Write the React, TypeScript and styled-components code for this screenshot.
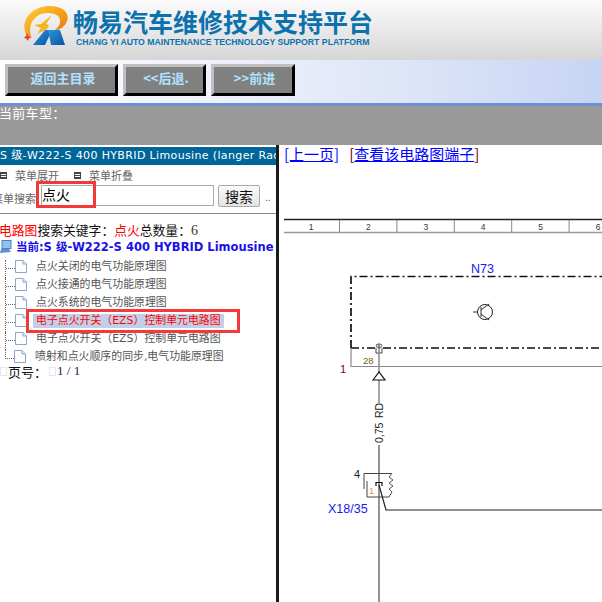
import React from 'react'
import styled, { createGlobalStyle } from 'styled-components'

const GlobalStyle = createGlobalStyle`
  html, body {
    margin: 0;
    padding: 0;
    background: #fff;
    overflow: hidden;
  }
  body {
    font-family: "Liberation Sans", "Noto Sans CJK SC", sans-serif;
  }
`

const Page = styled.div`
  width: 602px;
  height: 602px;
  display: flex;
  flex-direction: column;
  overflow: hidden;
`

const Header = styled.header`
  height: 60px;
  flex: none;
  display: flex;
  align-items: flex-start;
  padding: 5px 0 0 22px;
  box-sizing: border-box;
  gap: 3px;
  background: linear-gradient(#fbfbfb, #f0f0f0 30%, #d6d6d6);
`

const BrandText = styled.div`
  display: flex;
  flex-direction: column;
  padding-top: 1px;
`

const BrandName = styled.div`
  font: 700 25px/30px "Noto Sans CJK SC", sans-serif;
  color: #0b72ae;
  white-space: nowrap;
`

const BrandEnglish = styled.div`
  font: 700 8.7px/12px "Liberation Sans", sans-serif;
  color: #0b72ae;
  margin-left: 3px;
  white-space: nowrap;
`

const Nav = styled.nav`
  height: 46px;
  flex: none;
  display: flex;
  gap: 5px;
  padding: 4px 0 0 5px;
  box-sizing: border-box;
  background: linear-gradient(90deg, #ffffff, #dfe6f8 65%, #c6d4f4);
  border-bottom: 3px solid #6f8fd6;
`

const NavButton = styled.button<{ $width: number }>`
  width: ${(p) => p.$width}px;
  height: 32px;
  padding: 0 0 5px 3px;
  box-sizing: border-box;
  background: #808080;
  border-style: solid;
  border-width: 3px;
  border-color: #c0c0c0 #000 #000 #c0c0c0;
  color: #b0e2ff;
  font: 700 13px "Noto Sans CJK SC", sans-serif;
`

const CarBar = styled.div`
  height: 39px;
  flex: none;
  background: #999;
  color: #fff;
  font: 13px/14px "Noto Sans CJK SC", sans-serif;
  letter-spacing: 0.3px;
  text-indent: -1px;
`

const Body = styled.main`
  flex: 1;
  display: flex;
  min-height: 0;
`

const Side = styled.aside`
  width: 276px;
  flex: none;
  position: relative;
  overflow: hidden;
  padding-top: 2px;
  box-sizing: border-box;
`

const Divider = styled.div`
  width: 3px;
  flex: none;
  background: #1a1a1a;
`

const TitleBar = styled.div`
  height: 18px;
  background: #006699;
  color: #fff;
  font: 11px/18px "DejaVu Sans", "Noto Sans CJK SC", sans-serif;
  letter-spacing: 0.36px;
  white-space: nowrap;
  overflow: hidden;
`

const MenuRow = styled.div`
  height: 20px;
  display: flex;
  align-items: center;
  color: #666;
  font: 11px "Noto Sans CJK SC", sans-serif;
`

const MenuToggle = styled.span<{ $width: number }>`
  width: ${(p) => p.$width}px;
  display: flex;
  align-items: center;
  gap: 8px;
`

const MenuGlyph = styled.i`
  width: 5px;
  height: 5px;
  border: 1px solid #444;
  background: repeating-linear-gradient(#444 0 1px, #fff 1px 2px);
`

const SearchRow = styled.div`
  height: 29px;
  display: flex;
  align-items: flex-start;
  border-bottom: 1px solid #888;
  box-sizing: border-box;
`

const SearchLabel = styled.label`
  width: 41px;
  flex: none;
  margin-left: -8px;
  padding-top: 5px;
  color: #666;
  font: 11px "Noto Sans CJK SC", sans-serif;
  white-space: nowrap;
`

const SearchInput = styled.input`
  width: 173px;
  height: 21px;
  flex: none;
  box-sizing: border-box;
  margin: 0 0 0 8px;
  padding: 0 0 4px 0;
  border: 1px solid #aaa;
  font: 14px "Noto Sans CJK SC", sans-serif;
  color: #000;
  outline: none;
`

const SearchButton = styled.button`
  width: 42px;
  height: 22px;
  flex: none;
  margin-left: 4px;
  padding: 0 0 2px;
  border: 1px solid #aaa;
  border-radius: 2px;
  background: linear-gradient(#fafafa, #e4e4e4);
  font: 14px "Noto Sans CJK SC", sans-serif;
  color: #111;
`

const Dots = styled.span`
  margin: 7px 0 0 5px;
  color: #555;
  font-size: 10px;
`

const ResultLine = styled.div`
  margin-top: 7px;
  height: 18px;
  margin-left: -1px;
  font: 12.8px/18px "Noto Sans CJK SC", sans-serif;
  color: #111;
  white-space: nowrap;
`

const Red = styled.span`
  color: #f00;
`

const Count = styled.span`
  font-family: "Liberation Serif", serif;
  font-size: 14px;
  color: #432;
`

const CurrentLine = styled.div`
  height: 16px;
  display: flex;
  align-items: center;
  gap: 4px;
  color: #1a10e8;
  font: 700 11.5px/16px "DejaVu Sans", "Noto Sans CJK SC", sans-serif;
  white-space: nowrap;
`

const Tree = styled.ul`
  list-style: none;
  margin: 5px 0 0 5px;
  padding: 0;
`

const TreeRow = styled.li<{ $last?: boolean }>`
  height: 18px;
  display: flex;
  align-items: flex-start;
  border-left: ${(p) => (p.$last ? 'none' : '1px dotted #666')};
  margin-left: ${(p) => (p.$last ? '1px' : '0')};
`

const Elbow = styled.span`
  width: 9px;
  height: 8px;
  flex: none;
  border-bottom: 1px dotted #666;
`

const LastElbow = styled(Elbow)`
  border-left: 1px dotted #666;
  width: 8px;
  margin-left: -1px;
`

const RowLabel = styled.span<{ $selected?: boolean }>`
  margin-left: ${(p) => (p.$selected ? '6px' : '9px')};
  padding: 0 ${(p) => (p.$selected ? '3px' : '0')};
  height: 14px;
  font: 10.9px/14px "DejaVu Sans", "Noto Sans CJK SC", sans-serif;
  white-space: nowrap;
  color: ${(p) => (p.$selected ? '#f00' : '#555')};
  background: ${(p) => (p.$selected ? '#c2cfe8' : 'transparent')};
`

const Pager = styled.div`
  display: flex;
  align-items: center;
  height: 18px;
  margin-top: -6px;
  font: 13px "Noto Sans CJK SC", sans-serif;
  color: #111;
`

const PagerMark = styled.i<{ $gap: number }>`
  width: 5px;
  height: 7px;
  margin-left: ${(p) => p.$gap}px;
  margin-right: 1px;
  border: 1px solid #dfe9f3;
`

const PagerValue = styled.span`
  font-family: "Liberation Serif", serif;
  font-size: 13px;
  color: #224;
`

const Callout = styled.div<{ $left: number; $top: number; $w: number; $h: number }>`
  position: absolute;
  left: ${(p) => p.$left}px;
  top: ${(p) => p.$top}px;
  width: ${(p) => p.$w}px;
  height: ${(p) => p.$h}px;
  box-sizing: border-box;
  border: 3px solid #f33a3a;
`

const Content = styled.section`
  flex: 1;
  min-width: 0;
  overflow: hidden;
  padding-left: 5px;
`

const Links = styled.div`
  height: 70px;
  display: flex;
  gap: 10px;
  font: 15px/17px "Noto Sans CJK SC", sans-serif;
  color: #600;
  white-space: nowrap;
`

const PageLink = styled.a`
  color: #00f;
  text-decoration: underline;
`

const Diagram = styled.svg`
  display: block;
  flex: none;
`

function Logo() {
  return (
    <svg width="48" height="42" viewBox="0 0 48 42" style={{ flex: 'none' }}>
      <defs>
        <linearGradient id="ring" x1="0" y1="0" x2="1" y2="1">
          <stop offset="0" stopColor="#ffd23a" />
          <stop offset="0.6" stopColor="#f59a16" />
          <stop offset="1" stopColor="#e8640e" />
        </linearGradient>
        <linearGradient id="leg" x1="0" y1="0" x2="1" y2="1">
          <stop offset="0" stopColor="#2a9ad8" />
          <stop offset="1" stopColor="#0a4ea8" />
        </linearGradient>
      </defs>
      <path
        d="M5 31 C-3 18 8 1 28 1 C41 1 48 8 45 16 C43 22 37 25 32 26 C37 22 40 17 37 12 C34 8 26 7 19 9 C11 12 6 21 9 31 Z"
        fill="url(#ring)"
      />
      <path d="M30 10 L19 19 L12 20 L19 23 L15 29 L25 24 L27 20 L24 19 Z" fill="#f7b41e" />
      <path d="M5 28 L6.5 31 L10 32 L7 33.5 L6 36 L4.5 34 L2 32.5 L4 31 Z" fill="#e8482a" />
      <path d="M11 40 L23 25 L30 25 L23 40 Z" fill="url(#leg)" />
      <path d="M26 25 L38 25 L43 40 L29 40 Z" fill="url(#leg)" />
    </svg>
  )
}

function ComputerIcon() {
  return (
    <svg width="12" height="14" viewBox="0 0 12 14" style={{ flex: 'none' }}>
      <rect x="2" y="0.5" width="9" height="8" fill="#8fc3ee" stroke="#4a7fc0" />
      <path d="M1 9 L9 9 L11 12 L0 13 Z" fill="#5d8fc8" />
    </svg>
  )
}

function DocIcon() {
  return (
    <svg width="12" height="13" viewBox="0 0 12 13" style={{ flex: 'none' }}>
      <path d="M0.5 0.5 H8 L11.5 4 V12.5 H0.5 Z" fill="#fbfdff" stroke="#8aa8c8" />
      <path d="M8 0.5 V4 H11.5" fill="#dbe7f3" stroke="#8aa8c8" />
    </svg>
  )
}

const rulerCells = ['1', '2', '3', '4', '5', '6']

// page coordinates shifted so the drawing starts at x=284, y=215
function Schematic() {
  return (
    <Diagram width="318" height="387" viewBox="0 0 318 387">
      <line x1="0" y1="4.5" x2="318" y2="4.5" stroke="#222" strokeWidth="1.5" />
      <line x1="0" y1="17.5" x2="318" y2="17.5" stroke="#999" strokeWidth="1.5" />
      {rulerCells.map((n, i) => (
        <g key={n}>
          {i < 5 && (
            <line x1={55.5 + i * 57.4} y1="5" x2={55.5 + i * 57.4} y2="17" stroke="#888" />
          )}
          <text
            x={27 + i * 57.4}
            y="14.5"
            fontSize="8.5"
            textAnchor="middle"
            fontFamily="Liberation Sans"
            fill="#333"
          >
            {n}
          </text>
        </g>
      ))}

      <text x="187" y="58" fontSize="12.5" fontFamily="Liberation Sans" fill="#1a1aee">
        N73
      </text>
      <path
        d="M67 133 V61.5 H318 M67 133 H318"
        fill="none"
        stroke="#111"
        strokeWidth="1.7"
        strokeDasharray="8 3 2 3"
      />

      <circle cx="201" cy="97" r="7.5" fill="none" stroke="#222" />
      <path
        d="M193 97 H189 M197 92 V102 M197 95 L205 89 M197 99 L205 105"
        fill="none"
        stroke="#333"
      />

      <path d="M67 133 V151.5 H318" fill="none" stroke="#888" strokeWidth="1.2" />
      <text x="56" y="158" fontSize="11" fontFamily="Liberation Sans" fill="#800000">
        1
      </text>
      <text x="79" y="149" fontSize="9.5" fontFamily="Liberation Sans" fill="#7a5a20">
        28
      </text>
      <text
        transform="translate(98 130) rotate(-90)"
        x="-3"
        fontSize="8.5"
        fontFamily="Liberation Sans"
        fill="#333"
      >
        8
      </text>
      <path d="M92 133 V138 H98 V133" fill="none" stroke="#444" />
      <line x1="95" y1="128" x2="95" y2="188" stroke="#888" strokeWidth="1.5" />
      <path d="M89 165 L95 157 L101 165 Z" fill="#fff" stroke="#111" strokeWidth="1.2" />

      <text
        transform="translate(99 203) rotate(-90)"
        fontSize="10.5"
        fontFamily="Liberation Sans"
        fill="#222"
      >
        RD
      </text>
      <text
        transform="translate(99 228) rotate(-90)"
        fontSize="10.5"
        fontFamily="Liberation Sans"
        fill="#222"
      >
        0,75
      </text>
      <line x1="95" y1="230" x2="95" y2="387" stroke="#888" strokeWidth="1.8" />

      <path d="M80 274 V258.5 H108" fill="none" stroke="#444" />
      <path d="M83 266 V282 H105" fill="none" stroke="#444" />
      <path
        d="M108 258 L105 262 L109 265 L105 268 L109 271 L105 274 L108 277 L105 282"
        fill="none"
        stroke="#555"
      />
      <path d="M92 271 V267.5 H98 V271" fill="none" stroke="#111" strokeWidth="1.2" />
      <path d="M95 270 L102 295 H318" fill="none" stroke="#222" strokeWidth="1.2" />
      <text x="70" y="263" fontSize="11" fontFamily="Liberation Sans" fill="#123">
        4
      </text>
      <text x="85" y="279" fontSize="9.5" fontFamily="Liberation Sans" fill="#e09a30">
        1
      </text>
      <text x="44" y="298" fontSize="12.5" fontFamily="Liberation Sans" fill="#1a1aee">
        X18/35
      </text>
    </Diagram>
  )
}

const results = [
  '点火关闭的电气功能原理图',
  '点火接通的电气功能原理图',
  '点火系统的电气功能原理图',
  '电子点火开关（EZS）控制单元电路图',
  '电子点火开关（EZS）控制单元电路图',
  '喷射和点火顺序的同步,电气功能原理图',
]

export default function App() {
  return (
    <Page>
      <GlobalStyle />
      <Header>
        <Logo />
        <BrandText>
          <BrandName>畅易汽车维修技术支持平台</BrandName>
          <BrandEnglish>CHANG YI AUTO MAINTENANCE TECHNOLOGY SUPPORT PLATFORM</BrandEnglish>
        </BrandText>
      </Header>
      <Nav>
        <NavButton $width={113}>返回主目录</NavButton>
        <NavButton $width={83}>{'<<后退.'}</NavButton>
        <NavButton $width={84}>{'>>前进'}</NavButton>
      </Nav>
      <CarBar>当前车型：</CarBar>
      <Body>
        <Side>
          <TitleBar>S 级-W222-S 400 HYBRID Limousine (langer Radstand)</TitleBar>
          <MenuRow>
            <MenuToggle $width={74}>
              <MenuGlyph />
              菜单展开
            </MenuToggle>
            <MenuToggle $width={80}>
              <MenuGlyph />
              菜单折叠
            </MenuToggle>
          </MenuRow>
          <SearchRow>
            <SearchLabel>菜单搜索</SearchLabel>
            <SearchInput readOnly value="点火" />
            <SearchButton>搜索</SearchButton>
            <Dots>..</Dots>
          </SearchRow>
          <ResultLine>
            <Red>电路图</Red>搜索关键字：<Red>点火</Red>总数量：<Count>6</Count>
          </ResultLine>
          <CurrentLine>
            <ComputerIcon />
            当前:S 级-W222-S 400 HYBRID Limousine
          </CurrentLine>
          <Tree>
            {results.map((label, i) => {
              const last = i === results.length - 1
              return (
                <TreeRow key={i} $last={last}>
                  {last ? <LastElbow /> : <Elbow />}
                  <DocIcon />
                  <RowLabel $selected={i === 3}>{label}</RowLabel>
                </TreeRow>
              )
            })}
          </Tree>
          <Pager>
            <PagerMark $gap={0} />
            页号：
            <PagerMark $gap={2} />
            <PagerValue>1 / 1</PagerValue>
          </Pager>
          <Callout $left={36} $top={36} $w={60} $h={27} />
          <Callout $left={26} $top={164} $w={214} $h={24} />
        </Side>
        <Divider />
        <Content>
          <Links>
            <span>
              <PageLink>[上一页]</PageLink>
            </span>
            <span>
              [<PageLink>查看该电路图端子</PageLink>]
            </span>
          </Links>
          <Schematic />
        </Content>
      </Body>
    </Page>
  )
}
